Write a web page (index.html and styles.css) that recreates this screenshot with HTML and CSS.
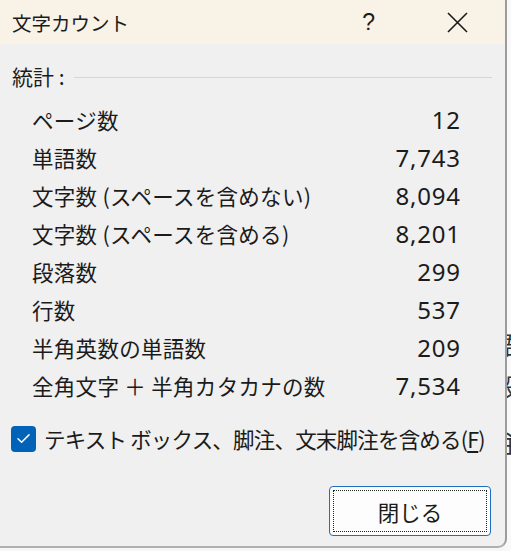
FILE: index.html
```html
<!DOCTYPE html>
<html lang="ja">
<head>
<meta charset="utf-8">
<title>文字カウント</title>
<link rel="stylesheet" href="styles.css">
</head>
<body>
<div class="screen">
  <div class="dialog">
    <div class="titlebar">
      <span class="title">文字カウント</span>
      <span class="help">?</span>
      <span class="close">
        <svg width="21" height="21" viewBox="0 0 21 21"><path d="M1 1 L20 20 M20 1 L1 20" stroke="#1a1a1a" stroke-width="1.6" fill="none"/></svg>
      </span>
    </div>
    <div class="content">
      <div class="group-head">
        <span>統計 :</span>
        <span class="rule"></span>
      </div>
      <div class="stats">
        <div class="row"><span class="label">ページ数</span><span class="num">12</span></div>
        <div class="row"><span class="label">単語数</span><span class="num">7,743</span></div>
        <div class="row"><span class="label">文字数 (スペースを含めない)</span><span class="num">8,094</span></div>
        <div class="row"><span class="label">文字数 (スペースを含める)</span><span class="num">8,201</span></div>
        <div class="row"><span class="label">段落数</span><span class="num">299</span></div>
        <div class="row"><span class="label">行数</span><span class="num">537</span></div>
        <div class="row"><span class="label">半角英数の単語数</span><span class="num">209</span></div>
        <div class="row"><span class="label">全角文字 ＋ 半角カタカナの数</span><span class="num">7,534</span></div>
      </div>
      <label class="check">
        <span class="box">
          <svg width="25" height="25" viewBox="0 0 25 25"><path d="M7 12.8 L10.6 16.3 L18 8.9" stroke="#ffffff" stroke-width="1.5" fill="none" stroke-linecap="round" stroke-linejoin="round"/></svg>
        </span>
        <span class="check-label">テキスト ボックス、脚注、文末脚注を含める(<u>F</u>)</span>
      </label>
      <div class="actions">
        <button class="btn"><span class="focus">閉じる</span></button>
      </div>
    </div>
  </div>
  <div class="behind">
    <div class="g1">語</div>
    <div class="g2">段</div>
    <div class="g3">注</div>
  </div>
</div>
</body>
</html>
```
FILE: styles.css
```css
html, body {
  margin: 0;
  padding: 0;
  background: #f7f7f7;
}
body {
  font-family: "Noto Sans CJK JP", "Noto Sans", sans-serif;
  color: #1b1b1b;
}
.screen {
  display: flex;
  width: 511px;
  height: 551px;
  overflow: hidden;
}
.dialog {
  width: 505px;
  height: 546px;
  flex: none;
  background: #f0f0f0;
  border-right: 2px solid #9c9c9c;
  border-bottom: 2px solid #b0b0b0;
  border-bottom-right-radius: 9px;
  display: flex;
  flex-direction: column;
  overflow: hidden;
}
.titlebar {
  height: 44px;
  background: #f9f2e7;
  display: flex;
  align-items: center;
  flex: none;
}
.title {
  font-size: 19.5px;
  margin-left: 12px;
  flex: 1;
}
.help {
  font-family: "Liberation Sans", sans-serif;
  font-size: 23px;
  margin-right: 72px;
}
.close {
  display: flex;
  margin-right: 37px;
}
.content {
  padding: 20px 13px 0 12px;
  display: flex;
  flex-direction: column;
}
.group-head {
  display: flex;
  align-items: center;
  font-size: 21px;
  height: 24px;
  gap: 9px;
}
.rule {
  flex: 1;
  height: 1px;
  background: #d6d6d6;
  margin-top: 2px;
}
.stats {
  margin-top: 13px;
  padding-left: 20px;
  padding-right: 32px;
  display: flex;
  flex-direction: column;
}
.row {
  display: flex;
  justify-content: space-between;
  align-items: center;
  height: 37.9px;
  font-size: 21.5px;
}
.label {
  letter-spacing: 0.3px;
}
.num {
  font-family: "Noto Sans", sans-serif;
  font-size: 24px;
  letter-spacing: 0.8px;
  margin-right: -0.8px;
}
.check {
  display: flex;
  align-items: center;
  gap: 8px;
  margin-top: 19px;
  margin-left: -1px;
  font-size: 21.5px;
}
.check-label {
  letter-spacing: -0.8px;
}
.box {
  width: 25px;
  height: 26px;
  border-radius: 4px;
  background: #0063b8;
  display: flex;
  align-items: center;
  justify-content: center;
}
.check u {
  text-underline-offset: 3px;
}
.actions {
  display: flex;
  justify-content: flex-end;
  margin-top: 32px;
  padding-right: 1px;
}
.btn {
  width: 162px;
  height: 50px;
  background: #fdfdfd;
  border: 1px solid #1c6fc0;
  border-radius: 4px;
  padding: 3px;
  font-family: inherit;
  color: #1b1b1b;
  display: flex;
}
.focus {
  flex: 1;
  border: 1px dotted #222;
  display: flex;
  align-items: center;
  justify-content: center;
  font-size: 21.5px;
}
.behind {
  flex: 1;
  overflow: hidden;
  background: #f9f9f9;
  font-size: 24px;
  color: #333;
}
.behind div {
  margin-left: -12px;
}
.g1 { margin-top: 326px; }
.g2 { margin-top: 7px; }
.g3 { margin-top: 22px; }
```
